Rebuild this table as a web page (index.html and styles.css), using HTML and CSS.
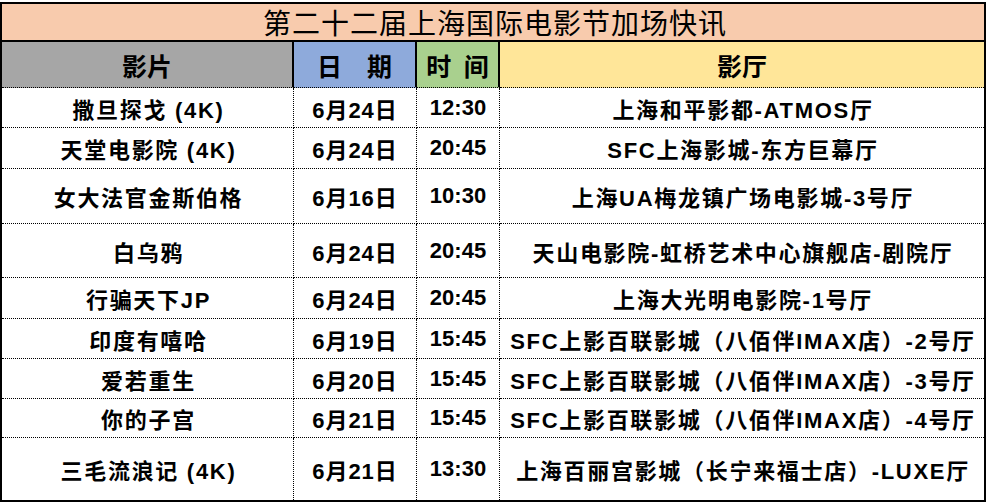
FILE: index.html
```html
<!DOCTYPE html>
<html lang="zh-CN">
<head>
<meta charset="utf-8">
<title>第二十二届上海国际电影节加场快讯</title>
<link rel="stylesheet" href="styles.css">
</head>
<body>
<div class="sheet">
  <div class="title">第二十二届上海国际电影节加场快讯</div>

  <div class="hd c1 gray">影片</div>
  <div class="hd c2 blue">日　期</div>
  <div class="hd c3 green">时&#8194;间</div>
  <div class="hd c4 yellow">影厅</div>

  <div class="cell c1">撒旦探戈 (4K)</div><div class="cell c2">6月24日</div><div class="cell c3">12:30</div><div class="cell c4">上海和平影都-ATMOS厅</div>
  <div class="cell c1">天堂电影院 (4K)</div><div class="cell c2">6月24日</div><div class="cell c3">20:45</div><div class="cell c4">SFC上海影城-东方巨幕厅</div>
  <div class="cell c1">女大法官金斯伯格</div><div class="cell c2">6月16日</div><div class="cell c3">10:30</div><div class="cell c4">上海UA梅龙镇广场电影城-3号厅</div>
  <div class="cell c1">白乌鸦</div><div class="cell c2">6月24日</div><div class="cell c3">20:45</div><div class="cell c4">天山电影院-虹桥艺术中心旗舰店-剧院厅</div>
  <div class="cell c1">行骗天下JP</div><div class="cell c2">6月24日</div><div class="cell c3">20:45</div><div class="cell c4">上海大光明电影院-1号厅</div>
  <div class="cell c1">印度有嘻哈</div><div class="cell c2">6月19日</div><div class="cell c3">15:45</div><div class="cell c4">SFC上影百联影城（八佰伴IMAX店）-2号厅</div>
  <div class="cell c1">爱若重生</div><div class="cell c2">6月20日</div><div class="cell c3">15:45</div><div class="cell c4">SFC上影百联影城（八佰伴IMAX店）-3号厅</div>
  <div class="cell c1">你的子宫</div><div class="cell c2">6月21日</div><div class="cell c3">15:45</div><div class="cell c4">SFC上影百联影城（八佰伴IMAX店）-4号厅</div>
  <div class="cell c1 last">三毛流浪记 (4K)</div><div class="cell c2 last">6月21日</div><div class="cell c3 last">13:30</div><div class="cell c4 last">上海百丽宫影城（长宁来福士店）-LUXE厅</div>
</div>
</body>
</html>
```

FILE: styles.css
```css
html, body {
  margin: 0;
  padding: 0;
  background: #ffffff;
}
body {
  padding-top: 2px;
  font-family: "Liberation Sans", "Noto Sans CJK SC", sans-serif;
  color: #000;
}
.sheet {
  width: 986px;
  box-sizing: border-box;
  border: 2px solid #000;
  display: grid;
  grid-template-columns: 292px 123px 83px 484px;
  grid-template-rows: 38px 46px 40px 41px 55px 54px 41px 40px 40px 39px 62px;
}
.title {
  grid-column: 1 / 5;
  background: #f8cbad;
  border-bottom: 2px solid #000;
  box-sizing: border-box;
  display: flex;
  align-items: center;
  justify-content: center;
  font-size: 28px;
  font-weight: 400;
  letter-spacing: 1px;
  padding-left: 4px;
}
.hd {
  box-sizing: border-box;
  display: flex;
  align-items: center;
  justify-content: center;
  font-size: 25px;
  font-weight: 700;
  border-right: 2px solid #000;
  border-bottom: 1px dotted #000;
}
.hd.c4 { border-right: none; }
.gray { background: #a6a6a6; }
.blue { background: #8eaadb; }
.green { background: #a9d08e; }
.yellow { background: #ffe699; }
.cell {
  box-sizing: border-box;
  display: flex;
  align-items: center;
  justify-content: center;
  font-size: 22px;
  font-weight: 700;
  border-right: 1px dotted #000;
  border-bottom: 1px dotted #000;
  white-space: nowrap;
}
.cell.c1,
.cell.c4 {
  letter-spacing: 1.7px;
  padding-left: 2px;
}
.cell.c2 { letter-spacing: 1px; }
.cell.c4 { border-right: none; }
.cell.last { border-bottom: none; }
```
